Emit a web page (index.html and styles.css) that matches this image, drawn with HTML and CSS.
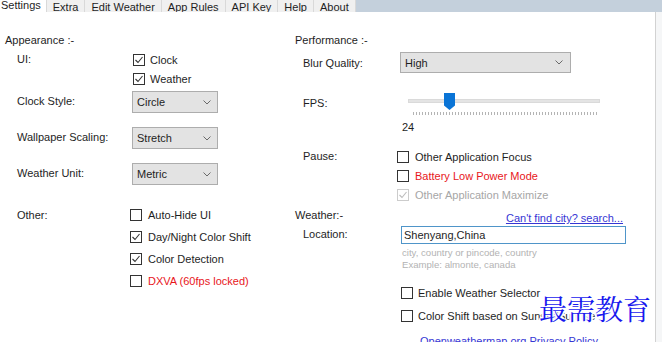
FILE: index.html
```html
<!DOCTYPE html>
<html>
<head>
<meta charset="utf-8">
<link rel="stylesheet" href="styles.css">
</head>
<body>
<div class="window">
  <div class="tabstrip">
    <div class="tab active">Settings</div>
    <div class="tab">Extra</div>
    <div class="tab">Edit Weather</div>
    <div class="tab">App Rules</div>
    <div class="tab">API Key</div>
    <div class="tab">Help</div>
    <div class="tab">About</div>
  </div>
  <div class="frame">
    <div class="panel">
      <div class="col left">
        <div class="heading">Appearance :-</div>
        <div class="row ui-row">
          <div class="label">UI:</div>
          <div class="checks">
            <div class="check"><span class="box"><svg viewBox="0 0 10 10"><path d="M1.5 5L4 7.5L8.5 2"/></svg></span>Clock</div>
            <div class="check"><span class="box"><svg viewBox="0 0 10 10"><path d="M1.5 5L4 7.5L8.5 2"/></svg></span>Weather</div>
          </div>
        </div>
        <div class="row sel-row first">
          <div class="label">Clock Style:</div>
          <div class="select small"><span>Circle</span><svg class="chev" viewBox="0 0 8 5"><path d="M0.5 0.5L4 4L7.5 0.5"/></svg></div>
        </div>
        <div class="row sel-row">
          <div class="label">Wallpaper Scaling:</div>
          <div class="select small"><span>Stretch</span><svg class="chev" viewBox="0 0 8 5"><path d="M0.5 0.5L4 4L7.5 0.5"/></svg></div>
        </div>
        <div class="row sel-row">
          <div class="label">Weather Unit:</div>
          <div class="select small"><span>Metric</span><svg class="chev" viewBox="0 0 8 5"><path d="M0.5 0.5L4 4L7.5 0.5"/></svg></div>
        </div>
        <div class="row other-row">
          <div class="label">Other:</div>
          <div class="checks tall">
            <div class="check"><span class="box"></span>Auto-Hide UI</div>
            <div class="check"><span class="box"><svg viewBox="0 0 10 10"><path d="M1.5 5L4 7.5L8.5 2"/></svg></span>Day/Night Color Shift</div>
            <div class="check"><span class="box"><svg viewBox="0 0 10 10"><path d="M1.5 5L4 7.5L8.5 2"/></svg></span>Color Detection</div>
            <div class="check red"><span class="box"></span>DXVA (60fps locked)</div>
          </div>
        </div>
      </div>
      <div class="col right">
        <div class="heading">Performance :-</div>
        <div class="row blur-row">
          <div class="label wide">Blur Quality:</div>
          <div class="select large"><span>High</span><svg class="chev" viewBox="0 0 8 5"><path d="M0.5 0.5L4 4L7.5 0.5"/></svg></div>
        </div>
        <div class="row fps-row">
          <div class="label wide fps-label">FPS:</div>
          <div class="slider">
            <div class="track"></div>
            <svg class="thumb" viewBox="0 0 11 17"><path d="M0 0H11V12.5L5.5 17L0 12.5Z"/></svg>
            <div class="ticks"></div>
            <div class="value">24</div>
          </div>
        </div>
        <div class="row pause-row">
          <div class="label wide pause-label">Pause:</div>
          <div class="checks">
            <div class="check"><span class="box"></span>Other Application Focus</div>
            <div class="check red"><span class="box"></span>Battery Low Power Mode</div>
            <div class="check disabled"><span class="box"><svg viewBox="0 0 10 10"><path d="M1.5 5L4 7.5L8.5 2"/></svg></span>Other Application Maximize</div>
          </div>
        </div>
        <div class="weather-head">
          <div class="heading">Weather:-</div>
          <a class="link search-link" href="#">Can't find city? search...</a>
        </div>
        <div class="row loc-row">
          <div class="label loc-label">Location:</div>
          <div class="input">Shenyang,China</div>
        </div>
        <div class="hints">
          <div>city, country or pincode, country</div>
          <div>Example: almonte, canada</div>
        </div>
        <div class="checks weather-checks">
          <div class="check"><span class="box"></span>Enable Weather Selector</div>
          <div class="check"><span class="box"></span>Color Shift based on Sunset/Sunrise</div>
        </div>
        <a class="link privacy" href="#">Openweathermap.org Privacy Policy</a>
      </div>
    </div>
    <div class="watermark">最需教育</div>
  </div>
</div>
</body>
</html>
```

FILE: styles.css
```css
* { box-sizing: border-box; }
html, body { margin: 0; padding: 0; }
body {
  width: 662px;
  height: 342px;
  overflow: hidden;
  font-family: "Liberation Sans", Arial, sans-serif;
  font-size: 11px;
  color: #1e1e1e;
  background: #ffffff;
}
.window {
  width: 662px;
  height: 342px;
  display: flex;
  flex-direction: column;
  background: #c4d0dc;
}
.tabstrip {
  height: 12px;
  flex: none;
  display: flex;
  align-items: flex-end;
  margin-left: -4px;
}
.tab {
  height: 20px;
  flex: none;
  padding: 7px 6px 0 6px;
  line-height: 14px;
  background: #f0f0f0;
  border: 1px solid #d9d9d9;
  border-bottom: none;
  margin-left: -1px;
  white-space: nowrap;
}
.tab.active {
  background: #ffffff;
  padding: 6px 5px 0 5px;
  height: 21px;
  position: relative;
  z-index: 1;
}
.frame {
  flex: 1;
  position: relative;
  display: flex;
  background: #f5f6f7;
}
.panel {
  width: 656px;
  height: 100%;
  background: #ffffff;
  border-right: 1px solid #d2d2d2;
  display: flex;
  padding-top: 21px;
  overflow: hidden;
}
.col { flex: none; }
.col.left { width: 294px; padding-left: 5px; }
.col.right { width: 361px; padding-left: 1px; }
.heading { line-height: 14px; height: 14px; white-space: nowrap; }
.row { display: flex; }
.label { width: 115px; flex: none; margin-left: 12px; white-space: nowrap; }
.label.wide { width: 97px; margin-left: 8px; }
.ui-row { margin-top: 3px; }
.ui-row .label { line-height: 19px; }
.checks { display: flex; flex-direction: column; }
.check {
  height: 19px;
  display: flex;
  align-items: center;
  white-space: nowrap;
}
.ui-row .checks { padding-left: 1px; }
.box {
  width: 12px;
  height: 12px;
  border: 1px solid #333333;
  background: #ffffff;
  margin-right: 5px;
  flex: none;
  display: flex;
}
.box svg { width: 10px; height: 10px; }
.box path { fill: none; stroke: #333333; stroke-width: 1.1; }
.check.red { color: #e8161b; }
.check.disabled { color: #a6a6a6; }
.check.disabled .box { border-color: #cccccc; }
.check.disabled .box path { stroke: #bcbcbc; }
.sel-row { height: 22px; align-items: center; margin-top: 14px; }
.sel-row.first { margin-top: 3px; }
.sel-row .label { padding-bottom: 2px; }
.select {
  height: 22px;
  border: 1px solid #adadad;
  background: #e3e3e3;
  display: flex;
  align-items: center;
  justify-content: space-between;
  padding: 0 6px 0 4px;
  flex: none;
}
.select.small { width: 86px; }
.select.large { width: 171px; height: 21px; padding-right: 7px; padding-left: 4px; }
.chev { width: 8px; height: 5px; }
.chev path { fill: none; stroke: #6a6a6a; stroke-width: 1; }
.other-row { margin-top: 19px; }
.other-row .label { line-height: 22px; }
.checks.tall { margin-left: -2px; }
.checks.tall .check { height: 22px; }
.checks.tall .box { margin-right: 6px; }

.blur-row { margin-top: 5px; align-items: center; height: 21px; }
.fps-row { margin-top: 17px; height: 44px; }
.fps-label { margin-top: 6px; line-height: 14px; height: 14px; }
.slider { position: relative; width: 210px; }
.track {
  margin-top: 9px;
  margin-left: 8px;
  width: 192px;
  height: 4px;
  background: #e4e4e4;
  border: 1px solid #dadada;
}
.thumb {
  position: absolute;
  left: 44px;
  top: 3px;
  width: 11px;
  height: 17px;
}
.thumb path { fill: #0a74d6; }
.ticks {
  margin-top: 9px;
  margin-left: 13px;
  width: 184px;
  height: 3px;
  background: repeating-linear-gradient(to right, #b4b4b4 0 1px, transparent 1px 3px);
}
.value { margin-top: 5px; padding-left: 2px; line-height: 14px; }
.pause-row { margin-top: 13px; }
.label.pause-label { line-height: 19px; width: 94px; }
.pause-row .box { margin-right: 6px; }

.weather-head {
  margin-top: 4px;
  height: 16px;
  display: flex;
  justify-content: space-between;
}
.link {
  color: #3636d4;
  text-decoration: underline;
  white-space: nowrap;
  line-height: 14px;
}
.search-link { margin-top: 3px; margin-right: 32px; }
.loc-row { margin-top: 2px; align-items: center; }
.loc-label { margin-left: 8px; width: 98px; padding-bottom: 3px; }
.input {
  width: 225px;
  height: 18px;
  border: 1px solid #4f95c9;
  padding-left: 2px;
  line-height: 16px;
}
.hints {
  margin-top: 3px;
  padding-left: 107px;
  font-size: 9.6px;
  line-height: 12px;
  color: #b3b3b3;
  white-space: nowrap;
}
.weather-checks { margin-top: 10px; padding-left: 106px; }
.weather-checks .check { height: 23px; }
.weather-checks .box { margin-right: 5px; }
.privacy { display: block; margin-top: 7px; margin-left: 125px; }

.watermark {
  position: absolute;
  left: 539px;
  top: 279px;
  font-family: "Noto Serif CJK SC", "Noto Sans CJK SC", serif;
  font-size: 28px;
  line-height: 34px;
  color: #1818ee;
  white-space: nowrap;
  text-shadow: 1px 0 0 #fff, -1px 0 0 #fff, 0 1px 0 #fff, 0 -1px 0 #fff, 2px 0 1px #fff, -2px 0 1px #fff;
}
```
